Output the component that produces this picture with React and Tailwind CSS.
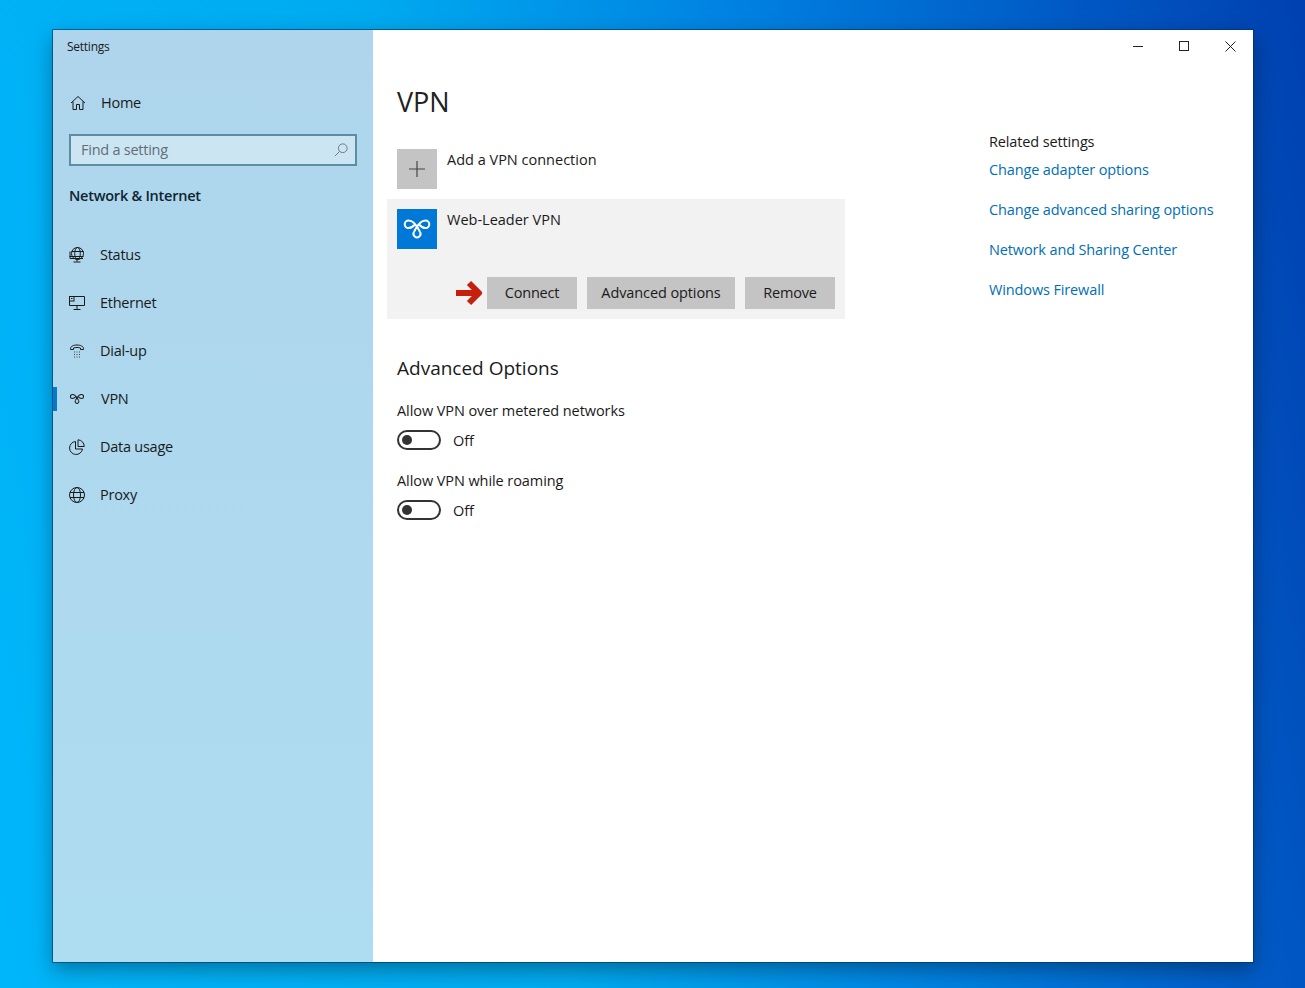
import React from 'react';

const VpnGlyph = ({ className, width = 2 }) => (
  <svg className={className} viewBox="0 2 30 24" fill="none" stroke="currentColor" strokeWidth={width}>
    <path d="M18 17C16 13 13 5.500 6.500 5.500a3.800 3.800 0 0 0 0 7.600c3 0 4.500-1.500 6.500-3.600" />
    <path d="M12 17C14 13 17 5.500 23.500 5.500a3.800 3.800 0 0 1 0 7.600c-3 0-4.500-1.500-6.500-3.600" />
    <path d="M12 17a3.500 3.500 0 1 0 6 0" />
  </svg>
);

const navIcons = {
  home: (
    <svg className="w-4 h-4" viewBox="0 0 16 16" fill="none" stroke="currentColor" strokeWidth="1">
      <path d="M1 8 8 1.500 15 8M3 6.500v8h3.500v-5h3v5H13v-8" />
    </svg>
  ),
  status: (
    <svg className="w-4 h-4" viewBox="0 0 16 16" fill="none" stroke="currentColor" strokeWidth="1">
      <circle cx="8.500" cy="6.500" r="6" />
      <ellipse cx="8.500" cy="6.500" rx="2.800" ry="6" />
      <path d="M2.500 4.500h12M.5 9.500h14M1 4.500v7h13M8 11.500v3M4.500 15h7" />
    </svg>
  ),
  ethernet: (
    <svg className="w-4 h-4" viewBox="0 0 16 16" fill="none" stroke="currentColor" strokeWidth="1">
      <path d="M5 1.500h10.500v9H.5V6" />
      <rect x=".5" y="1.500" width="4.500" height="4.500" />
      <path d="M8 10.500V14M4.500 14.500h7M2 3.500h1.500" />
    </svg>
  ),
  dialup: (
    <svg className="w-4 h-4" viewBox="0 0 16 16" fill="none" stroke="currentColor" strokeWidth="1">
      <path d="M1.500 6.500C1 3 5 2 8 2s7 1 6.500 4.500h-3V5c-2-.7-5-.7-7 0v1.500z" />
      <path d="M5 9h.8M7.600 9h.8M10.200 9h.8M5 11.500h.8M7.600 11.500h.8M10.200 11.500h.8M5 14h.8M7.600 14h.8M10.200 14h.8" />
    </svg>
  ),
  data: (
    <svg className="w-4 h-4" viewBox="0 0 16 16" fill="none" stroke="currentColor" strokeWidth="1">
      <path d="M6.500 2.500a6.500 6.500 0 1 0 7 7.500H6.500z" />
      <path d="M9 .8a6.500 6.500 0 0 1 6.200 6.700H9z" />
    </svg>
  ),
  proxy: (
    <svg className="w-4 h-4" viewBox="0 0 16 16" fill="none" stroke="currentColor" strokeWidth="1">
      <circle cx="8" cy="8" r="7.500" />
      <ellipse cx="8" cy="8" rx="3.500" ry="7.500" />
      <path d="M1 5.500h14M1 10.500h14" />
    </svg>
  ),
};

const navItems = [
  { label: 'Status', icon: navIcons.status },
  { label: 'Ethernet', icon: navIcons.ethernet },
  { label: 'Dial-up', icon: navIcons.dialup },
  { label: 'VPN', icon: <VpnGlyph className="w-4 h-4" width={1.9} />, active: true },
  { label: 'Data usage', icon: navIcons.data },
  { label: 'Proxy', icon: navIcons.proxy },
];

const links = [
  'Change adapter options',
  'Change advanced sharing options',
  'Network and Sharing Center',
  'Windows Firewall',
];

const Toggle = ({ label }) => (
  <div>
    <div className="h-5 leading-[22px] tracking-[-0.08px]">{label}</div>
    <div className="flex items-center h-5 mt-[10px]">
      <div className="w-11 h-5 rounded-full border-2 border-[#333] flex items-center pl-[3px]">
        <div className="w-[10px] h-[10px] rounded-full bg-[#333]" />
      </div>
      <span className="ml-3 pt-px">Off</span>
    </div>
  </div>
);

const App = () => {
  return (
    <div className="h-[988px] overflow-hidden pt-[30px] pl-[53px] bg-[linear-gradient(78deg,#00b6fa_0%,#00aaf0_38%,#0082e2_62%,#0058c4_85%,#0040b0_100%)] font-['Open_Sans',sans-serif] text-[14.500px] text-[#1a1a1a]">
      <div className="w-[1200px] h-[932px] flex bg-white shadow-[0_0_0_1px_rgba(0,50,90,0.6),0_8px_20px_rgba(0,0,0,0.35)]">
        {/* Sidebar */}
        <div className="w-[320px] bg-[linear-gradient(180deg,#aed5ec,#aedcf0)] flex flex-col shrink-0 tracking-[-0.25px]">
          <div className="h-8 pt-[2px] pl-[14px] flex items-center text-xs">Settings</div>
          <div className="h-12 mt-4 pt-[2px] pl-[17px] flex items-center">
            {navIcons.home}
            <span className="ml-[15px]">Home</span>
          </div>
          <div className="mx-4 mt-2 h-8 border-2 border-[#5f8ba3] bg-[#cce5f3] pl-[10px] pr-[7px] flex items-center justify-between text-[#5f6f78]">
            <span>Find a setting</span>
            <svg className="w-[14px] h-[14px]" viewBox="0 0 16 16" fill="none" stroke="currentColor" strokeWidth="1">
              <circle cx="10" cy="6" r="5" />
              <path d="M6.500 9.500 1 15" />
            </svg>
          </div>
          <div className="mt-[19px] pl-4 h-[22px] leading-[22px] font-semibold text-[#0f2430]">Network &amp; Internet</div>
          <div className="mt-6">
            {navItems.map((item) => (
              <div key={item.label} className="relative h-12 pl-4 flex items-center">
                {item.active && <div className="absolute left-0 top-3 w-1 h-6 bg-[#0a78c8]" />}
                {item.icon}
                <span className={item.active ? 'ml-4' : 'ml-[15px]'}>{item.label}</span>
              </div>
            ))}
          </div>
        </div>

        {/* Main */}
        <div className="flex-1 flex flex-col tracking-[-0.13px]">
          <div className="h-8 flex justify-end shrink-0">
            <div className="w-[46px] flex items-center justify-center">
              <div className="w-[10px] h-px bg-[#222]" />
            </div>
            <div className="w-[46px] flex items-center justify-center">
              <div className="w-[10px] h-[10px] border border-[#222]" />
            </div>
            <div className="w-[46px] flex items-center justify-center">
              <svg className="w-[11px] h-[11px]" viewBox="0 0 11 11" stroke="#222" strokeWidth="1">
                <path d="M.5.500l10 10M10.500.500l-10 10" />
              </svg>
            </div>
          </div>

          <div className="flex">
            <div className="w-[616px] pl-6 shrink-0">
              <h1 className="mt-5 h-10 leading-10 text-[27px] tracking-normal text-[#222]">VPN</h1>
              <div className="mt-[27px] flex">
                <div className="w-10 h-10 bg-[#c4c4c4] flex items-center justify-center">
                  <svg className="w-4 h-4" viewBox="0 0 16 16" stroke="#444" strokeWidth="1.200">
                    <path d="M8 0v16M0 8h16" />
                  </svg>
                </div>
                <div className="ml-[10px] h-5 leading-[22px] tracking-normal">Add a VPN connection</div>
              </div>

              <div className="-ml-[10px] mt-[10px] w-[458px] h-[120px] bg-[#f2f2f2] p-[10px]">
                <div className="flex">
                  <div className="w-10 h-10 bg-[#0078d7] text-white flex items-center justify-center">
                    <VpnGlyph className="w-[30px] h-6" />
                  </div>
                  <div className="ml-[10px] h-5 leading-[22px] tracking-normal">Web-Leader VPN</div>
                </div>
                <div className="mt-7 flex items-center justify-end gap-[10px]">
                  <svg className="w-7 h-7 -mr-[7px]" viewBox="0 0 28 28" fill="none" stroke="#c61f0e" strokeWidth="6" strokeLinejoin="round">
                    <path d="M0 14h21M13 4l10 10-10 10" />
                  </svg>
                  <div className="w-[90px] h-8 bg-[#c4c4c4] flex items-center justify-center tracking-[-0.2px]">Connect</div>
                  <div className="w-[148px] h-8 bg-[#c4c4c4] flex items-center justify-center tracking-[-0.1px]">Advanced options</div>
                  <div className="w-[90px] h-8 bg-[#c4c4c4] flex items-center justify-center tracking-[-0.2px]">Remove</div>
                </div>
              </div>

              <h2 className="mt-[35px] h-7 leading-7 text-[19px] tracking-normal">Advanced Options</h2>
              <div className="mt-[18px] flex flex-col gap-5">
                <Toggle label="Allow VPN over metered networks" />
                <Toggle label="Allow VPN while roaming" />
              </div>
            </div>

            <div className="pt-[70px]">
              <div className="h-5 leading-5">Related settings</div>
              <div className="mt-2 flex flex-col gap-5 text-[#006fb5]">
                {links.map((link) => (
                  <div key={link} className="h-5 leading-5">{link}</div>
                ))}
              </div>
            </div>
          </div>
        </div>
      </div>
    </div>
  );
};

export default App;
